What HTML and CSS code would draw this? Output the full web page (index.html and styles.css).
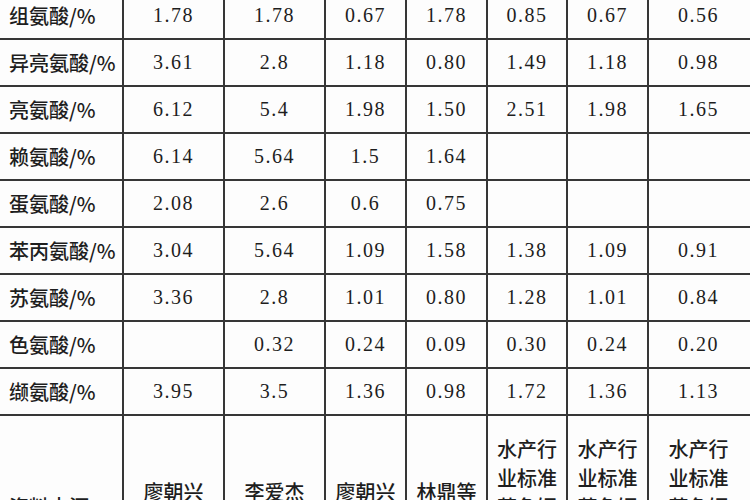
FILE: index.html
```html
<!DOCTYPE html>
<html lang="zh">
<head>
<meta charset="utf-8">
<title>氨基酸含量表</title>
<link rel="stylesheet" href="styles.css">
</head>
<body>
<div class="sheet">
<table class="grid">
  <colgroup>
    <col class="c-name">
    <col class="c-wide">
    <col class="c-wide">
    <col class="c-narrow">
    <col class="c-narrow">
    <col class="c-narrow2">
    <col class="c-narrow">
    <col class="c-last">
  </colgroup>
  <tbody>
    <tr><td class="name">组氨酸/%</td><td>1.78</td><td>1.78</td><td>0.67</td><td>1.78</td><td>0.85</td><td>0.67</td><td class="end">0.56</td></tr>
    <tr><td class="name">异亮氨酸/%</td><td>3.61</td><td>2.8</td><td>1.18</td><td>0.80</td><td>1.49</td><td>1.18</td><td class="end">0.98</td></tr>
    <tr><td class="name">亮氨酸/%</td><td>6.12</td><td>5.4</td><td>1.98</td><td>1.50</td><td>2.51</td><td>1.98</td><td class="end">1.65</td></tr>
    <tr><td class="name">赖氨酸/%</td><td>6.14</td><td>5.64</td><td>1.5</td><td>1.64</td><td></td><td></td><td class="end"></td></tr>
    <tr><td class="name">蛋氨酸/%</td><td>2.08</td><td>2.6</td><td>0.6</td><td>0.75</td><td></td><td></td><td class="end"></td></tr>
    <tr><td class="name">苯丙氨酸/%</td><td>3.04</td><td>5.64</td><td>1.09</td><td>1.58</td><td>1.38</td><td>1.09</td><td class="end">0.91</td></tr>
    <tr><td class="name">苏氨酸/%</td><td>3.36</td><td>2.8</td><td>1.01</td><td>0.80</td><td>1.28</td><td>1.01</td><td class="end">0.84</td></tr>
    <tr><td class="name">色氨酸/%</td><td></td><td>0.32</td><td>0.24</td><td>0.09</td><td>0.30</td><td>0.24</td><td class="end">0.20</td></tr>
    <tr><td class="name">缬氨酸/%</td><td>3.95</td><td>3.5</td><td>1.36</td><td>0.98</td><td>1.72</td><td>1.36</td><td class="end">1.13</td></tr>
    <tr class="source">
      <td class="name">资料来源</td>
      <td>廖朝兴<br>(2000)</td>
      <td>李爱杰<br>(1996)</td>
      <td>廖朝兴<br>(2000)</td>
      <td>林鼎等<br>(1980)</td>
      <td>水产行<br>业标准<br>草鱼饲<br>料幼鱼<br>阶段</td>
      <td>水产行<br>业标准<br>草鱼饲<br>料中鱼<br>阶段</td>
      <td class="end">水产行<br>业标准<br>草鱼饲<br>料成鱼<br>阶段</td>
    </tr>
  </tbody>
</table>
</div>
</body>
</html>
```

FILE: styles.css
```css
html, body {
  margin: 0;
  padding: 0;
  background: #fdfdfd;
  overflow: hidden;
}

.sheet {
  margin-top: -9px;
  margin-left: -10px;
}

.grid {
  border-collapse: collapse;
  table-layout: fixed;
  width: 770px;
  color: #1e1e1e;
  font-family: "Liberation Serif", "Noto Sans CJK SC", serif;
  font-size: 20px;
}

.c-name { width: 132px; }
.c-wide { width: 101px; }
.c-narrow { width: 81px; }
.c-narrow2 { width: 80px; }
.c-last { width: 113px; }

.grid td {
  border: 2px solid #363636;
  height: 45px;
  padding: 0;
  text-align: center;
  vertical-align: middle;
  letter-spacing: 1.5px;
  white-space: nowrap;
}

.grid td.name {
  text-align: left;
  padding-left: 17px;
  letter-spacing: 0;
  font-family: "Noto Sans CJK SC", sans-serif;
  font-weight: 500;
}

.grid td.end {
  padding-right: 12px;
}

.source td {
  height: 180px;
  line-height: 29px;
  font-family: "Noto Sans CJK SC", sans-serif;
  font-weight: 500;
  letter-spacing: 0;
}
```
